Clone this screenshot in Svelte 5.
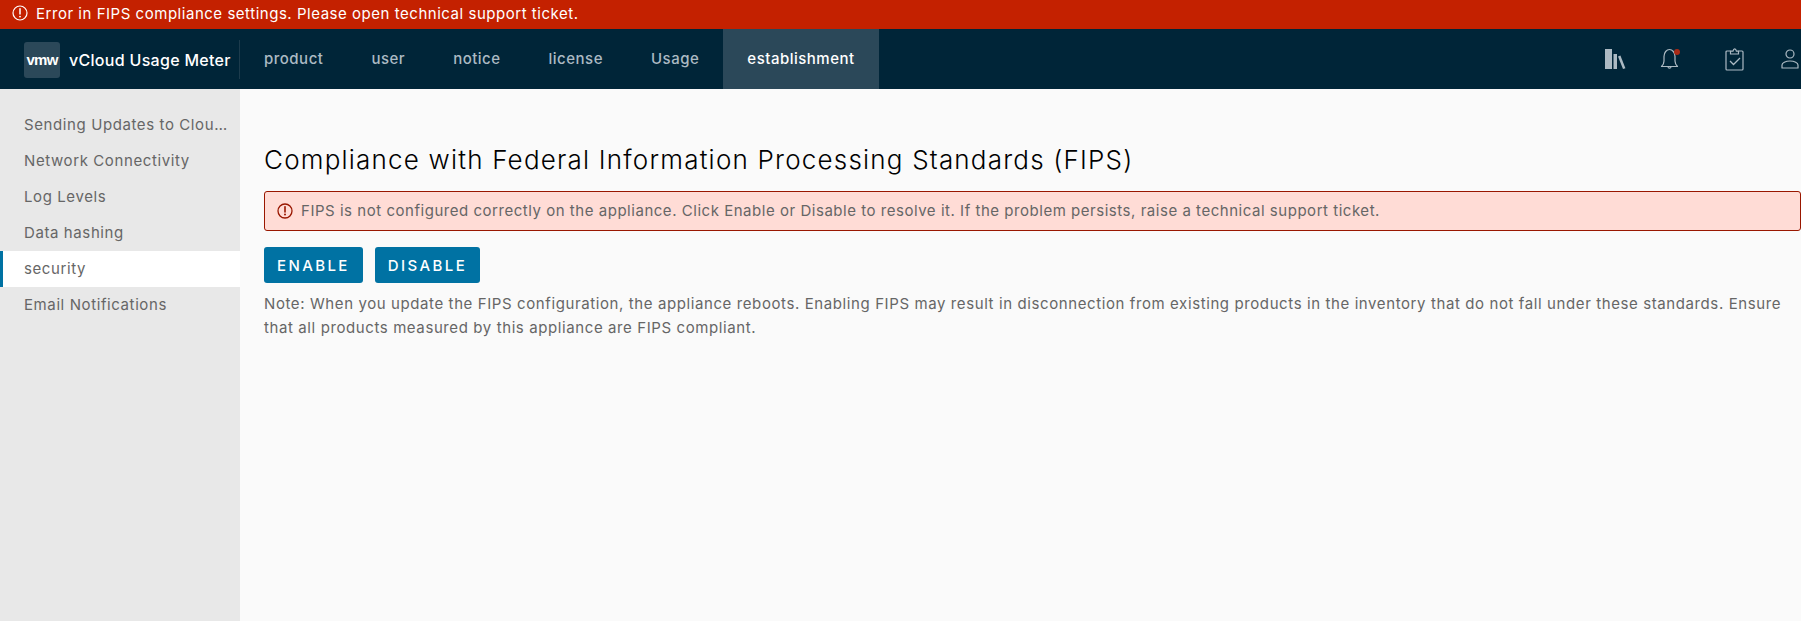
<script>
	const navItems = ['product', 'user', 'notice', 'license', 'Usage', 'establishment'];
	const sideItems = [
		'Sending Updates to Cloud Partner Navigator',
		'Network Connectivity',
		'Log Levels',
		'Data hashing',
		'security',
		'Email Notifications'
	];
</script>

<div class="app">
	<div class="banner">
		<svg class="banner-icon" viewBox="0 0 16 16" aria-hidden="true">
			<circle cx="8" cy="8" r="7" fill="none" stroke="currentColor" stroke-width="1.2" />
			<path d="M8 3.8v5.2" stroke="currentColor" stroke-width="1.5" stroke-linecap="round" />
			<circle cx="8" cy="11.6" r="0.95" fill="currentColor" />
		</svg>
		<span>Error in FIPS compliance settings. Please open technical support ticket.</span>
	</div>

	<header class="header">
		<div class="brand">
			<span class="logo">vmw</span>
			<span class="brand-name">vCloud Usage Meter</span>
		</div>
		<nav class="nav">
			{#each navItems as item}
				<span class="nav-item" class:active={item === 'establishment'}>{item}</span>
			{/each}
		</nav>
		<div class="actions">
			<svg class="icon" width="22" height="22" viewBox="0 0 22 22" aria-hidden="true">
				<path d="M1 1h7v20H1zM9.500 6H13v15H9.500z" fill="#acbac3" />
				<path d="M14 8.500l2.400-.9 5 12.600-2.400.9z" fill="#acbac3" />
			</svg>
			<svg class="icon" width="24" height="24" viewBox="0 0 24 24" aria-hidden="true">
				<path d="M3.500 19.500c1.600-1.500 2.500-3 2.500-5.500V9.500C6 5.500 8.600 2.500 11.500 2.500S17 5.500 17 9.500V14c0 2.500 1 4 2.500 5.500z" fill="none" stroke="#acbac3" stroke-width="1.200" stroke-linejoin="round" />
				<path d="M10 20c.3 1.600 2.700 1.600 3 0" fill="none" stroke="#acbac3" stroke-width="1.200" />
				<circle cx="19" cy="5" r="3" fill="#a92a16" />
			</svg>
			<svg class="icon clip" width="20" height="24" viewBox="0 0 20 24" aria-hidden="true">
				<path d="M5.500 4H2a1 1 0 0 0-1 1v17a1 1 0 0 0 1 1h15a1 1 0 0 0 1-1V5a1 1 0 0 0-1-1h-3.500" fill="none" stroke="#acbac3" stroke-width="1.200" />
				<path d="M5.500 7V4.200h2.500C8.300 2.600 9 1.800 9.700 1.800s1.400.8 1.700 2.400h2.100V7z" fill="none" stroke="#acbac3" stroke-width="1.200" />
				<path d="M5 14l3.500 3.500L15 11" fill="none" stroke="#acbac3" stroke-width="1.300" />
			</svg>
			<svg class="icon person" width="18" height="20" viewBox="0 0 18 20" aria-hidden="true">
				<circle cx="9" cy="5" r="4" fill="none" stroke="#acbac3" stroke-width="1.200" />
				<path d="M1 19v-3c0-2 3.500-4 8-4s8 2 8 4v3z" fill="none" stroke="#acbac3" stroke-width="1.200" stroke-linejoin="round" />
			</svg>
		</div>
	</header>

	<div class="body">
		<aside class="side">
			{#each sideItems as item}
				<div class="side-item" class:current={item === 'security'}>{item}</div>
			{/each}
		</aside>
		<main class="main">
			<h1>Compliance with Federal Information Processing Standards (FIPS)</h1>
			<div class="alert">
				<svg class="alert-icon" viewBox="0 0 16 16" aria-hidden="true">
					<circle cx="8" cy="8" r="7" fill="none" stroke="currentColor" stroke-width="1.300" />
					<path d="M8 3.800v5.200" stroke="currentColor" stroke-width="1.600" stroke-linecap="round" />
					<circle cx="8" cy="11.600" r="1" fill="currentColor" />
				</svg>
				<span>FIPS is not configured correctly on the appliance. Click Enable or Disable to resolve it. If the problem persists, raise a technical support ticket.</span>
			</div>
			<div class="buttons">
				<button>ENABLE</button>
				<button>DISABLE</button>
			</div>
			<p class="note">Note: When you update the FIPS configuration, the appliance reboots. Enabling FIPS may result in disconnection from existing products in the inventory that do not fall under these standards. Ensure that all products measured by this appliance are FIPS compliant.</p>
		</main>
	</div>
</div>

<style>
	:global(body) {
		margin: 0;
		overflow: hidden;
	}

	.app {
		width: 1801px;
		height: 621px;
		display: flex;
		flex-direction: column;
		font-family: Inter, "Noto Sans", sans-serif;
		overflow: hidden;
	}

	.banner {
		height: 29px;
		background: #c42100;
		color: #fff;
		display: flex;
		align-items: center;
		gap: 8px;
		padding: 0 0 3px 12px;
		box-sizing: border-box;
		font-size: 15px;
		letter-spacing: 0.53px;
		flex-shrink: 0;
	}

	.banner-icon {
		width: 16px;
		height: 16px;
	}

	.header {
		height: 60px;
		background: #002538;
		display: flex;
		align-items: stretch;
		flex-shrink: 0;
	}

	.brand {
		width: 240px;
		box-sizing: border-box;
		display: flex;
		align-items: center;
		gap: 9px;
		padding-left: 24px;
		margin: 11px 0 10px;
		border-right: 1px solid #1c3b4c;
	}

	.logo {
		width: 36px;
		height: 36px;
		flex-shrink: 0;
		background: #2b4859;
		border-radius: 3px;
		color: #fff;
		display: flex;
		align-items: center;
		justify-content: center;
		font-family: "Liberation Sans", sans-serif;
		font-weight: 700;
		font-size: 15px;
		letter-spacing: -0.7px;
	}

	.brand-name {
		color: #fff;
		font-size: 16px;
		font-weight: 500;
		letter-spacing: 0.3px;
		white-space: nowrap;
	}

	.nav {
		display: flex;
	}

	.nav-item {
		display: flex;
		align-items: center;
		padding: 0 24px 2px;
		color: #acbac3;
		font-size: 15px;
		font-weight: 500;
		letter-spacing: 0.5px;
	}

	.nav-item.active {
		background: #2b4859;
		color: #fff;
	}

	.actions {
		margin-left: auto;
		display: flex;
		align-items: center;
		gap: 32px;
		padding-right: 2px;
	}

	.icon {
		flex-shrink: 0;
	}

	.clip {
		margin-left: 11px;
	}

	.person {
		margin-left: 4px;
	}

	.body {
		flex: 1;
		display: flex;
		min-height: 0;
	}

	.side {
		width: 240px;
		flex-shrink: 0;
		background: #e8e8e8;
		padding-top: 18px;
		box-sizing: border-box;
	}

	.side-item {
		height: 36px;
		line-height: 36px;
		padding: 0 12px 0 24px;
		color: #666;
		font-size: 15px;
		letter-spacing: 0.6px;
		white-space: nowrap;
		overflow: hidden;
		text-overflow: ellipsis;
	}

	.side-item.current {
		background: #fff;
		box-shadow: inset 3px 0 0 #0072a3;
	}

	.main {
		flex: 1;
		min-width: 0;
		background: #fafafa;
		padding: 53px 0 0 24px;
		box-sizing: border-box;
	}

	h1 {
		margin: 0;
		font-size: 26px;
		font-weight: 300;
		letter-spacing: 1.2px;
		line-height: 36px;
		color: #000;
	}

	.alert {
		margin-top: 13px;
		height: 40px;
		box-sizing: border-box;
		background: #ffdcd6;
		border: 1px solid #991700;
		border-radius: 3px;
		display: flex;
		align-items: center;
		gap: 8px;
		padding-left: 12px;
		color: #666;
		font-size: 15px;
		letter-spacing: 0.53px;
		line-height: 20px;
	}

	.alert-icon {
		width: 16px;
		height: 16px;
		color: #991700;
		flex-shrink: 0;
	}

	.buttons {
		display: flex;
		gap: 12px;
		margin-top: 16px;
	}

	button {
		height: 36px;
		padding: 0 13px;
		background: #0072a3;
		color: #fff;
		border: none;
		border-radius: 3px;
		font-family: inherit;
		font-size: 15px;
		font-weight: 500;
		letter-spacing: 2.4px;
	}

	.note {
		margin: 9px 0 0;
		color: #666;
		font-size: 15px;
		letter-spacing: 0.6px;
		line-height: 24px;
	}
</style>
